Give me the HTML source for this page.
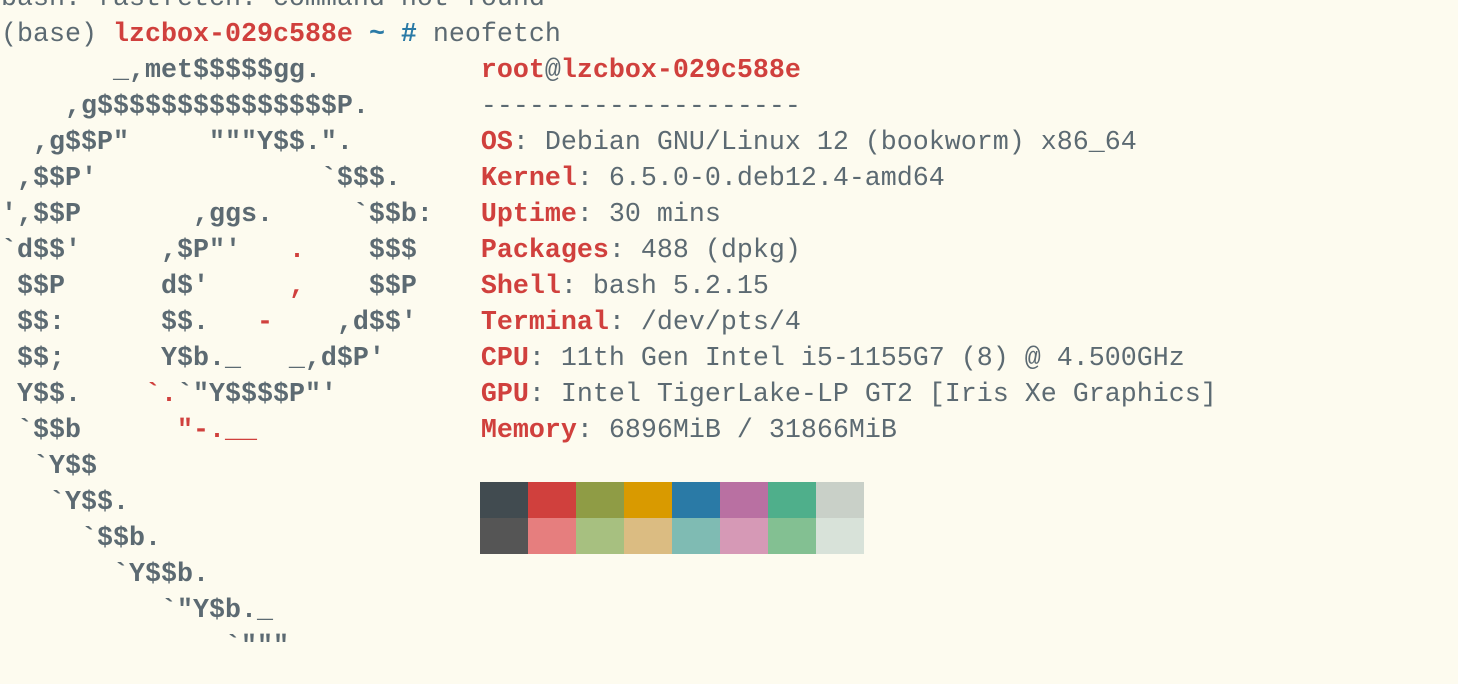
<!DOCTYPE html>
<html><head><meta charset="utf-8"><style>
html,body{margin:0;padding:0;width:1458px;height:684px;overflow:hidden;background:#fdfbef;}
pre{position:absolute;left:1px;top:-19px;margin:0;font-family:"Liberation Mono",monospace;font-size:26.67px;line-height:36px;color:#5c6a72;}
.b{font-weight:bold}
.r{color:#d0403d}
.u{color:#2a7aa6;font-weight:bold}
.sw{position:absolute;width:48px;height:36px}
</style></head><body>
<pre>bash: fastfetch: command not found
(base) <span class="b r">lzcbox-029c588e</span> <span class="u">~ #</span> neofetch
<span class="b">       _,met$$$$$gg.          </span><span class="b r">root</span>@<span class="b r">lzcbox-029c588e</span>
<span class="b">    ,g$$$$$$$$$$$$$$$P.       </span>--------------------
<span class="b">  ,g$$P"     """Y$$.".        </span><span class="b r">OS</span>: Debian GNU/Linux 12 (bookworm) x86_64
<span class="b"> ,$$P'              `$$$.     </span><span class="b r">Kernel</span>: 6.5.0-0.deb12.4-amd64
<span class="b">',$$P       ,ggs.     `$$b:   </span><span class="b r">Uptime</span>: 30 mins
<span class="b">`d$$'     ,$P"'   <span class="r">.</span>    $$$    </span><span class="b r">Packages</span>: 488 (dpkg)
<span class="b"> $$P      d$'     <span class="r">,</span>    $$P    </span><span class="b r">Shell</span>: bash 5.2.15
<span class="b"> $$:      $$.   <span class="r">-</span>    ,d$$'    </span><span class="b r">Terminal</span>: /dev/pts/4
<span class="b"> $$;      Y$b._   _,d$P'      </span><span class="b r">CPU</span>: 11th Gen Intel i5-1155G7 (8) @ 4.500GHz
<span class="b"> Y$$.    <span class="r">`.</span>`"Y$$$$P"'         </span><span class="b r">GPU</span>: Intel TigerLake-LP GT2 [Iris Xe Graphics]
<span class="b"> `$$b      <span class="r">"-.__</span>              </span><span class="b r">Memory</span>: 6896MiB / 31866MiB
<span class="b">  `Y$$</span>
<span class="b">   `Y$$.</span>
<span class="b">     `$$b.</span>
<span class="b">       `Y$$b.</span>
<span class="b">          `"Y$b._</span>
<span class="b">              `"""</span>
</pre>
<div class="sw" style="left:480px;top:482px;background:#414b50"></div>
<div class="sw" style="left:528px;top:482px;background:#d0403d"></div>
<div class="sw" style="left:576px;top:482px;background:#8f9c45"></div>
<div class="sw" style="left:624px;top:482px;background:#d99a00"></div>
<div class="sw" style="left:672px;top:482px;background:#2a7aa6"></div>
<div class="sw" style="left:720px;top:482px;background:#b970a2"></div>
<div class="sw" style="left:768px;top:482px;background:#4faf8b"></div>
<div class="sw" style="left:816px;top:482px;background:#c9d0c8"></div>
<div class="sw" style="left:480px;top:518px;background:#555555"></div>
<div class="sw" style="left:528px;top:518px;background:#e67e7e"></div>
<div class="sw" style="left:576px;top:518px;background:#a7c080"></div>
<div class="sw" style="left:624px;top:518px;background:#dbbc82"></div>
<div class="sw" style="left:672px;top:518px;background:#7fbbb3"></div>
<div class="sw" style="left:720px;top:518px;background:#d699b6"></div>
<div class="sw" style="left:768px;top:518px;background:#83c092"></div>
<div class="sw" style="left:816px;top:518px;background:#d8e2d9"></div>
</body></html>
